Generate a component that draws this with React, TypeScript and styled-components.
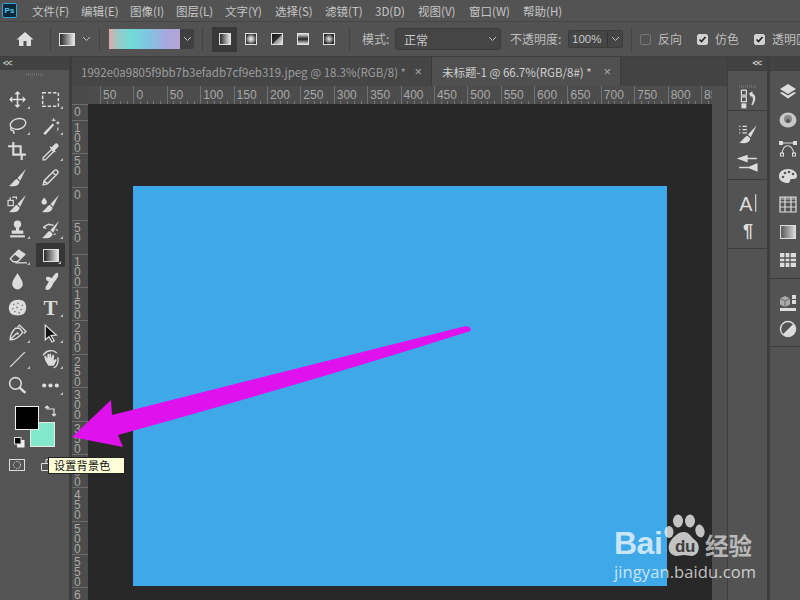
import React from "react";
import styled, { createGlobalStyle } from "styled-components";

const Global = createGlobalStyle`
  html, body { margin: 0; padding: 0; background: #535353; overflow: hidden; }
  * { box-sizing: border-box; }
  #root { width: 800px; height: 600px; }
  svg { display: block; flex: none; overflow: visible; }
`;

const FONT = `"Noto Sans CJK SC", "Liberation Sans", sans-serif`;

const Root = styled.div`
  position: relative; width: 800px; height: 600px; overflow: hidden;
  display: flex; flex-direction: column; background: #535353; color: #c4c4c4;
  font-family: ${FONT};
`;

/* ---------- menu ---------- */
const MenuBar = styled.div`
  height: 22px; flex: none; display: flex; align-items: center; background: #535353;
  border-bottom: 1px solid #464646; padding-left: 2px;
`;
const PsLogo = styled.div`
  width: 15px; height: 15px; margin-right: 15px; background: #0c2a3c; border: 1px solid #2fa3d6; border-radius: 2px;
  color: #5cc4ee; font: bold 8px/13px "Liberation Sans", sans-serif; text-align: center;
`;
const MenuItem = styled.span<{ $w: number }>`
  width: ${p => p.$w}px; flex: none; font-size: 11.5px; line-height: 20px; color: #c6c6c6; white-space: nowrap;
`;

/* ---------- options ---------- */
const OptionsBar = styled.div`
  height: 35px; flex: none; display: flex; align-items: center; background: #525252; overflow: hidden;
  border-bottom: 1px solid #3f3f3f; padding-left: 16px; font-size: 12px; color: #bfbfbf;
  & > * { flex: none; }
`;
const Sep = styled.div<{ $l: number; $r: number }>`
  width: 1px; height: 24px; background: #444; margin: 0 ${p => p.$r}px 0 ${p => p.$l}px;
`;
const Spacer = styled.span<{ $w: number }>`width: ${p => p.$w}px;`;
const GradPreview = styled.div`
  width: 71px; height: 20px;
  background: linear-gradient(90deg, #e2a9ab 0%, #9cc8c6 12%, #70dcd8 30%, #80c5e2 55%, #a8a8de 80%, #b3a3d6 100%);
`;
const GradDrop = styled.div`
  width: 14px; height: 20px; background: #3f3f3f; display: flex; align-items: center; justify-content: center;
  border-radius: 0 2px 2px 0;
`;
const ModeBtn = styled.div<{ $on?: boolean }>`
  width: 25px; height: 25px; display: flex; align-items: center; justify-content: center;
  background: ${p => (p.$on ? "#383838" : "transparent")};
  margin-left: ${p => (p.$on ? 0 : 1)}px;
`;
const Label = styled.span<{ $w: number }>`
  width: ${p => p.$w}px; white-space: nowrap; font-size: 12px; line-height: 18px; color: #bdbdbd;
`;
const SelectBox = styled.div`
  width: 106px; height: 22px; background: #454545; border: 1px solid #3c3c3c; border-radius: 3px;
  display: flex; align-items: center; justify-content: space-between; padding: 0 3px 0 8px; font-size: 12px; color: #c8c8c8;
`;
const PercentBox = styled.div`
  width: 55px; height: 18px; display: flex; align-items: center; background: #454545; border: 1px solid #3c3c3c; border-radius: 2px;
  font: 11.5px "Liberation Sans", sans-serif; color: #c8c8c8; padding-left: 3px; justify-content: space-between;
`;
const PercentDrop = styled.span`
  width: 15px; height: 16px; border-left: 1px solid #333; display: flex; align-items: center; justify-content: center;
`;
const Check = styled.div<{ $on?: boolean }>`
  width: 11px; height: 11px; margin-right: 7px; border-radius: 2px;
  border: 1px solid ${p => (p.$on ? "#d0d0d0" : "#777")};
  background: ${p => (p.$on ? "#d0d0d0" : "transparent")};
  display: flex; align-items: center; justify-content: center;
`;

/* ---------- workspace ---------- */
const Workspace = styled.div`flex: 1; min-height: 0; display: flex;`;
const LeftBar = styled.div`
  width: 69px; flex: none; background: #545454; display: flex; flex-direction: column; position: relative;
`;
const Collapse = styled.div`
  height: 13px; flex: none; background: #424242; font: bold 9px/12px "Liberation Sans", sans-serif; color: #bbb;
  padding-left: 3px; letter-spacing: -1px;
`;
const Grip = styled.div<{ $w: number }>`
  width: ${p => p.$w}px; height: 3px; margin: 3px auto 0; flex: none;
  background: repeating-linear-gradient(90deg, #6a6a6a 0 1px, transparent 1px 2px);
`;
const ToolGrid = styled.div`
  margin-top: 10px; display: grid; grid-template-columns: 33px 33px; grid-auto-rows: 26px; padding-left: 1px;
`;
const Tool = styled.div<{ $on?: boolean; $tri?: boolean }>`
  position: relative; display: flex; align-items: center; justify-content: center; color: #dcdcdc;
  ${p => p.$on && `background: #363636; margin: 1px 2px;  border-radius: 1px;`}
  ${p => p.$tri && `&::after { content: ""; position: absolute; right: 4px; bottom: 3px; border-style: solid; border-width: 0 0 3px 3px; border-color: transparent transparent #bbb transparent; }`}
`;
const Swatches = styled.div`position: relative; height: 48px; margin-top: 8px; flex: none;`;
const Fg = styled.div`
  position: absolute; left: 15px; top: 0; width: 24px; height: 24px; background: #000; border: 1px solid #eee; z-index: 1;
`;
const Bg = styled.div`
  position: absolute; left: 30px; top: 16px; width: 25px; height: 25px; background: #84e8cd; border: 1px solid #e8e8e8;
`;
const SwapIcon = styled.div`position: absolute; left: 45px; top: -1px;`;
const DefaultIcon = styled.div`position: absolute; left: 14px; top: 31px;`;
const MaskRow = styled.div`display: flex; padding-left: 9px; gap: 16px; margin-top: 5px;`;

const Divider = styled.div`width: 3px; flex: none; background: #3d3d3d;`;

const DocColumn = styled.div`width: 640px; flex: none; display: flex; flex-direction: column;`;
const TabRow = styled.div`height: 29px; flex: none; display: flex; background: #434343; font: 12px ${FONT};`;
const DocTab = styled.div<{ $on?: boolean; $w: number }>`
  width: ${p => p.$w}px; flex: none; display: flex; align-items: center; padding: 0 9px 0 ${p => (p.$on ? 10 : 9)}px;
  justify-content: space-between; white-space: nowrap;
  background: ${p => (p.$on ? "#505050" : "#454545")}; color: ${p => (p.$on ? "#cfcfcf" : "#9d9d9d")};
  border-right: 1px solid #3a3a3a;
`;
const TabText = styled.span`font-size: 11.5px;`;
const TabClose = styled.span`font: 13px "Liberation Sans", sans-serif; color: #a8a8a8;`;

const HRulerRow = styled.div`height: 18px; flex: none; display: flex; background: #4c4c4c;`;
const RulerCorner = styled.div`width: 16px; flex: none; background: #4a4a4a;`;
const HRuler = styled.div`
  flex: 1; display: flex; overflow: hidden; padding-left: 12px; position: relative;
  background: repeating-linear-gradient(90deg, #777 0 1px, transparent 1px 6.68px) 12px 100% / 100% 3px no-repeat;
`;
const HCell = styled.div`
  width: 33.4px; flex: none; border-left: 1px solid #707070; font: 12px/18px "Liberation Sans", sans-serif; color: #a8a8a8; padding-left: 2px;
`;
const Body = styled.div`flex: 1; min-height: 0; display: flex;`;
const VRuler = styled.div`
  width: 16px; flex: none; background: #4c4c4c; overflow: hidden; display: flex; flex-direction: column;
`;
const VCell = styled.div<{ $h: number }>`
  height: ${p => p.$h}px; flex: none; border-top: 1px solid #6e6e6e; padding: 2px 0 0 2px;
`;
const VDigits = styled.div`
  width: 8px; font: 12px/10px "Liberation Sans", sans-serif; color: #a8a8a8; word-break: break-all;
`;
const Canvas = styled.div`
  flex: 1; background: #282828; padding: 82px 0 0 45px;
`;
const Artboard = styled.div`width: 534px; height: 400px; background: #3ea8e8;`;

/* ---------- right dock ---------- */
const Dock = styled.div`flex: 1; min-width: 0; display: flex; background: #4f4f4f; overflow: hidden;`;
const Strip = styled.div`width: 16px; flex: none; background: #4f4f4f; border-right: 1px solid #3e3e3e; display: flex; flex-direction: column;`;
const StripHead = styled.div`height: 29px; background: #434343; flex: none;`;
const DockCol = styled.div<{ $w: number }>`
  width: ${p => p.$w}px; flex: none; display: flex; flex-direction: column; background: #3d3d3d; gap: 1px;
`;
const DockHead = styled.div`height: 13px; flex: none; background: #424242; font: bold 9px/12px "Liberation Sans", sans-serif; color: #ccc; letter-spacing: -1px; text-align: right; padding-right: 6px;`;
const DockGroup = styled.div<{ $h?: number; $grow?: boolean; $gap?: number; $top?: number }>`
  ${p => (p.$h ? `height: ${p.$h}px; flex: none;` : "")}
  ${p => (p.$grow ? "flex: 1;" : "")}
  background: #535353; display: flex; flex-direction: column; align-items: center; color: #dedede;
  padding-top: ${p => p.$top ?? 0}px; gap: ${p => p.$gap ?? 0}px;
`;
const ColGap = styled.div`width: 3px; flex: none; background: #3d3d3d;`;

/* ---------- overlays ---------- */
const Arrow = styled.svg`position: absolute; left: 0; top: 0; pointer-events: none;`;
const Tip = styled.div`
  position: absolute; left: 48px; top: 457px; width: 77px; height: 17px; background: #fdfdd8; border: 1px solid #222;
  font: 11px/15px ${FONT}; color: #111; padding-left: 5px; letter-spacing: 0.3px; white-space: nowrap;
`;
const Watermark = styled.div`
  position: absolute; left: 614px; top: 514px; width: 150px; height: 70px; color: rgba(255,255,255,.72); pointer-events: none;
`;
const WmTop = styled.div`display: flex; align-items: flex-end; height: 46px;`;
const WmBai = styled.span`font: bold 32px/34px "Liberation Sans", sans-serif; width: 50px; letter-spacing: -0.5px;`;
const WmJy = styled.span`font: bold 23.5px/30px ${FONT}; margin-left: -1px; color: rgba(255,255,255,.62);`;
const WmUrl = styled.div`font: 16.500px/18px "Open Sans", "Liberation Sans", sans-serif; margin-top: 3px; letter-spacing: .1px;`;

/* ---------- icons ---------- */
const S: React.FC<{ s?: number; children: React.ReactNode }> = ({ s = 20, children }) => (
  <svg width={s} height={s} viewBox="0 0 20 20" fill="none">{children}</svg>
);
const C = "#dcdcdc";
const brush = (
  <>
    <path d="M18 2 L10 10.500 L12.500 13 Z" fill={C} />
    <path d="M9.500 11.500 C7 12 6 15 2 18 C7 19 11.500 18 12 14 Z" fill={C} />
  </>
);
const Line = (d: string, w = 1.4) => <path d={d} stroke={C} strokeWidth={w} fill="none" />;

const icons: Record<string, React.ReactNode> = {
  move: <>{Line("M10 3V17M3 10H17", 1.5)}<path d="M10 2l3 3H7zM10 18l3-3H7zM2 10l3 3V7zM18 10l-3 3V7z" fill={C} /></>,
  marquee: <rect x="2.500" y="3.500" width="15" height="13" stroke={C} strokeWidth="1.400" strokeDasharray="3.200 1.800" />,
  lasso: <>{<ellipse cx="10.500" cy="8.500" rx="7.500" ry="5" transform="rotate(-15 10.500 8.500)" stroke={C} strokeWidth="1.300" />}{Line("M4 12c-1 2 0 3 1.500 3s1 3 1 3")}</>,
  wand: <><path d="M3 17.500L12 8l1.500 1.500L5 19z" fill={C} /><path d="M13 3v3M11 5h4M17 6v3M15.500 7.500h3M17 12v3" stroke={C} strokeWidth="1" /></>,
  crop: <>{Line("M1 5H13V14M6 1V13H18M14 13V18", 2)}</>,
  drop: <><path d="M3 16L11 8l2 2-8 8H3z" stroke={C} strokeWidth="1.300" /><path d="M11 6l3-3c1-1 2-1 3 0s1 2 0 3l-3 3 1 1-1 1-5-5 1-1z" fill={C} /></>,
  brush,
  pencil: <path d="M3 17l1-4L13.500 3.500c1-1 2-1 3 0s1 2 0 3L7 16zM4 13l3 3M12 5l3 3" stroke={C} strokeWidth="1.300" />,
  replace: <>{brush}<rect x="1" y="7" width="5" height="5" stroke={C} strokeWidth="1.100" />{Line("M5 4h4v2M3 7V4", 1.1)}</>,
  mix: <>{brush}<path d="M4 4c1 2 2.500 3 2.500 4.500a2.500 2.500 0 0 1-5 0C1.500 7 3 6 4 4z" fill={C} /></>,
  stamp: <><circle cx="10" cy="5" r="3.500" fill={C} /><path d="M8.500 8h3v3h4v3h-11v-3h4z" fill={C} /><rect x="3" y="15.500" width="14" height="2" fill={C} /></>,
  history: <>{brush}{Line("M3 8l5-3 5 1M3 8l3 1", 1.3)}{Line("M15 10l2 1M13 15l2-1", 1.1)}</>,
  eraser: <><path d="M3 13L11 5l6 4-7 7H6z" stroke={C} strokeWidth="1.300" /><path d="M11 5l6 4-4 4-6-4z" fill={C} />{Line("M8 17H19", 1.2)}</>,
  blur: <path d="M10 2c2 4 5 7 5 10.500a5 5 0 0 1-10 0C5 9 8 6 10 2z" fill={C} />,
  smudge: <path d="M17 2c1 2 0 4-1.500 6l-3 4c-1 3-3 6-5 6-2 .5-3-1-2-3l3-5C6 9 5 8 6 6c2-1 4 0 5 1l3-4c1-1 2-2 3-1z" fill={C} />,
  sponge: <><path d="M4 5c3-3 9-3 12-1 3 3 3 9 0 12-3 2-9 2-12 0-3-3-3-8 0-11z" fill={C} /><path d="M6 7h1M10 6h1M14 8h1M5 11h1M9 10h1M13 12h1M7 14h1M11 15h1" stroke="#555" strokeWidth="1.200" /></>,
  text: <text x="10" y="17" textAnchor="middle" fill={C} fontFamily="Liberation Serif, serif" fontWeight="bold" fontSize="20">T</text>,
  pen: <><path d="M3 16c0-4 1-7 5-11l4 0 3 4c-3 4-6 7-11 7zM3 16l6-6" stroke={C} strokeWidth="1.300" /><circle cx="10" cy="10" r="1.200" fill={C} /><path d="M10 4l2-2 6 6-2 2" stroke={C} strokeWidth="1.300" /></>,
  select: <path d="M5 2L5 16l3.500-3 3 5 2-1-3-5 5-.5z" fill="#111" stroke={C} strokeWidth="1.200" />,
  line: Line("M3 17L17 3", 1.2),
  hand: <><path d="M5 11l-1-4 1.500-.5L7 9V5l1.500-.5.5 4V4.500h1.500L11 9l1-3.500 1.500.5L13 11l2-1.500 1 1L13 16H8z" fill={C} />{Line("M3 6C6 1 13 0 16 4M17 8C18 13 16 17 13 18", 1.3)}</>,
  zoom: <><circle cx="8" cy="8" r="5.500" stroke={C} strokeWidth="1.500" /><path d="M12 12l5.500 5" stroke={C} strokeWidth="2.400" /></>,
  dots: <><circle cx="4" cy="10" r="2" fill={C} /><circle cx="10" cy="10" r="2" fill={C} /><circle cx="16" cy="10" r="2" fill={C} /></>,
  history2: <><rect x="4" y="2" width="4.500" height="4.500" stroke={C} strokeWidth="1.100" /><rect x="4" y="8" width="4.500" height="4.500" stroke={C} strokeWidth="1.100" /><rect x="4" y="14" width="4.500" height="4.500" fill={C} /><path d="M11 5l3-2v2c3 1 4 6 0 11l-1-1c2-3 2-7 0-8v2z" fill={C} /></>,
  brushset: <>{brush}<path d="M2 3h1M2 6h1M2 9h1M5 3h4M5 6h4M5 9h4" stroke={C} strokeWidth="1.200" /></>,
  brushopt: <><path d="M2 6l7-2.500v5zM9 6H18M2 14H11M11 14l7-3v6z" stroke={C} strokeWidth="1.400" fill={C} /></>,
  layers: <><path d="M10 2l8 5-8 5-8-5z" fill={C} /><path d="M2 11l2-1 6 3.500L16 10l2 1-8 5.500z" fill={C} /></>,
  channels: <><ellipse cx="10" cy="10" rx="8.500" ry="7.500" fill="#c8c8c8" /><circle cx="10" cy="9" r="4" fill="#8a8a8a" /><circle cx="10" cy="11" r="2" fill="#555" /></>,
  paths: <><path d="M4 16C5 5 14 5 16 16M2 5H18" stroke={C} strokeWidth="1.100" /><rect x="1" y="3" width="4" height="4" fill={C} /><rect x="15" y="3" width="4" height="4" fill={C} /><rect x="2.500" y="15" width="3" height="3" stroke={C} /><rect x="14.500" y="15" width="3" height="3" stroke={C} /></>,
  palette: <><path d="M10 3c5 0 9 3 9 7 0 3-3 3-5 3-2 0-2 1-2 2 0 2-2 2-4 2-4-1-7-3-7-7 0-4 4-7 9-7z" fill={C} /><circle cx="7" cy="7" r="1.300" fill="#555" /><circle cx="11" cy="6" r="1.300" fill="#555" /><circle cx="15" cy="8" r="1.300" fill="#555" /><circle cx="5" cy="11" r="1.300" fill="#555" /></>,
  swatches: <><path d="M2 3h16v15H2zM2 8h16M2 13h16M7 3v15M13 3v15" stroke={C} strokeWidth="1.200" /><rect x="2" y="3" width="16" height="3" fill={C} opacity=".4" /></>,
  gradPanel: <><defs><linearGradient id="gp" x1="0" y1="0" x2="1" y2="0"><stop offset="0" stopColor="#555" /><stop offset="1" stopColor="#ddd" /></linearGradient></defs><rect x="2.500" y="3.500" width="15" height="13" fill="url(#gp)" stroke={C} /></>,
  pattern: <><rect x="2" y="3" width="16" height="14" fill={C} /><path d="M7 3v14M12 3v14M2 8h16M2 12h16" stroke="#555" strokeWidth="1.300" /><rect x="8" y="9" width="3" height="2" fill={C} /></>,
  adjust3d: <><path d="M7 4l5 2.500v6L7 15l-5-2.500v-6z" fill="#aaa" /><path d="M7 9v6M2 6.500L7 9l5-2.500" stroke="#666" /><rect x="14" y="3" width="4" height="4" fill={C} /><rect x="14" y="8" width="4" height="4" fill={C} /><rect x="2" y="16" width="16" height="3" fill={C} /></>,
  adjust: <><circle cx="10" cy="10" r="7.500" stroke={C} strokeWidth="1.400" /><path d="M15.500 4.700A7.500 7.500 0 0 1 4.700 15.500z" fill={C} /></>,
  para: <text x="10" y="17" textAnchor="middle" fill={C} fontFamily="Liberation Sans, sans-serif" fontWeight="bold" fontSize="18">¶</text>,
  charA: <><text x="8" y="17" textAnchor="middle" fill={C} fontFamily="Liberation Sans, sans-serif" fontSize="18">A</text><path d="M17 2V18" stroke={C} strokeWidth="1" /></>,
};
const Ico: React.FC<{ n: string; s?: number }> = ({ n, s }) => <S s={s}>{icons[n]}</S>;

const Chevron: React.FC = () => (
  <svg width="9" height="6" viewBox="0 0 9 6" fill="none"><path d="M1 1l3.500 3.500L8 1" stroke="#bdbdbd" strokeWidth="1" /></svg>
);
const Tick: React.FC = () => (
  <svg width="9" height="9" viewBox="0 0 9 9"><path d="M1.500 4.500l2 2L7.500 2" stroke="#222" strokeWidth="1.600" fill="none" /></svg>
);

const GradSwatch: React.FC<{ id: string; kind: string; w?: number; h?: number }> = ({ id, kind, w = 13, h = 13 }) => {
  const fills: Record<string, React.ReactNode> = {
    l: <linearGradient id={id}><stop offset="0" stopColor="#222" /><stop offset="1" stopColor="#eee" /></linearGradient>,
    r: <radialGradient id={id}><stop offset="0" stopColor="#eee" /><stop offset=".4" stopColor="#bbb" /><stop offset="1" stopColor="#333" /></radialGradient>,
    a: <linearGradient id={id} x1="0" y1="0" x2="1" y2="1"><stop offset="0" stopColor="#111" /><stop offset=".5" stopColor="#333" /><stop offset=".5" stopColor="#888" /><stop offset="1" stopColor="#eee" /></linearGradient>,
    m: <linearGradient id={id} x1="0" y1="0" x2="0" y2="1"><stop offset="0" stopColor="#eee" /><stop offset=".5" stopColor="#222" /><stop offset="1" stopColor="#eee" /></linearGradient>,
    d: <radialGradient id={id}><stop offset="0" stopColor="#eee" /><stop offset="1" stopColor="#222" /></radialGradient>,
  };
  return (
    <svg width={w} height={h} viewBox={`0 0 ${w} ${h}`}>
      <defs>{fills[kind]}</defs>
      <rect x=".5" y=".5" width={w - 1} height={h - 1} fill={`url(#${id})`} stroke="#e0e0e0" />
    </svg>
  );
};

const menu: [string, number][] = [
  ["文件(F)", 49], ["编辑(E)", 49], ["图像(I)", 46], ["图层(L)", 49], ["文字(Y)", 50], ["选择(S)", 50],
  ["滤镜(T)", 50], ["3D(D)", 43], ["视图(V)", 51], ["窗口(W)", 54], ["帮助(H)", 60],
];

const tools: [string, boolean, boolean?][] = [
  ["move", true], ["marquee", true], ["lasso", true], ["wand", true], ["crop", false], ["drop", true],
  ["brush", false], ["pencil", false], ["replace", false], ["mix", false], ["stamp", true], ["history", true],
  ["eraser", true], ["gradient", true, true], ["blur", false], ["smudge", false], ["sponge", false], ["text", true],
  ["pen", true], ["select", true], ["line", true], ["hand", true], ["zoom", false], ["dots", true],
];

const hLabels = ["50", "0", "50", "100", "150", "200", "250", "300", "350", "400", "450", "500", "550", "600", "650", "700", "750", "800", "85"];
const vLabels: [string, number][] = [
  ["0", 16], ["100", 33.4], ["50", 33.4], ["0", 33.4], ["50", 33.4], ["100", 33.4], ["150", 33.4], ["200", 33.4], ["250", 33.4],
  ["300", 33.4], ["350", 33.4], ["400", 33.4], ["450", 33.4], ["500", 33.4], ["550", 33.4], ["6", 30],
];

export default function App() {
  return (
    <Root>
      <Global />
      <MenuBar>
        <PsLogo>Ps</PsLogo>
        {menu.map(([t, w]) => <MenuItem key={t} $w={w}>{t}</MenuItem>)}
      </MenuBar>

      <OptionsBar>
        <svg width="18" height="16" viewBox="0 0 18 16"><path d="M9 1L0.500 8.500H3V15H7.500V10H10.500V15H15V8.500H17.500z" fill="#dedede" /></svg>
        <Sep $l={16} $r={8} />
        <GradSwatch id="g0" kind="l" w={16} h={13} />
        <Spacer $w={7} />
        <Chevron />
        <Sep $l={8} $r={9} />
        <GradPreview />
        <GradDrop><Chevron /></GradDrop>
        <Sep $l={8} $r={9} />
        <ModeBtn $on><GradSwatch id="g1" kind="l" w={12} h={12} /></ModeBtn>
        <ModeBtn><GradSwatch id="g2" kind="r" w={12} h={12} /></ModeBtn>
        <ModeBtn><GradSwatch id="g3" kind="a" w={12} h={12} /></ModeBtn>
        <ModeBtn><GradSwatch id="g4" kind="m" w={12} h={12} /></ModeBtn>
        <ModeBtn><GradSwatch id="g5" kind="d" w={12} h={12} /></ModeBtn>
        <Sep $l={8} $r={12} />
        <Label $w={33}>模式:</Label>
        <SelectBox><span>正常</span><Chevron /></SelectBox>
        <Spacer $w={9} />
        <Label $w={58}>不透明度:</Label>
        <PercentBox>100%<PercentDrop><Chevron /></PercentDrop></PercentBox>
        <Sep $l={8} $r={8} />
        <Check />
        <Label $w={39}>反向</Label>
        <Check $on><Tick /></Check>
        <Label $w={39}>仿色</Label>
        <Check $on><Tick /></Check>
        <Label $w={48}>透明区域</Label>
      </OptionsBar>

      <Workspace>
        <LeftBar>
          <Collapse>&lt;&lt;</Collapse>
          <Grip $w={18} />
          <ToolGrid>
            {tools.map(([n, tri, on]) => (
              <Tool key={n} $tri={tri} $on={on}>
                {n === "gradient" ? <GradSwatch id="gt" kind="l" w={16} h={13} /> : <Ico n={n} s={21} />}
              </Tool>
            ))}
          </ToolGrid>
          <Swatches>
            <Fg />
            <Bg />
            <SwapIcon>
              <svg width="12" height="12" viewBox="0 0 12 12" fill="none"><path d="M2 1v3h7v7M0 3l2-2 2 2M7 9l2 2 2-2" stroke="#ddd" strokeWidth="1.200" /></svg>
            </SwapIcon>
            <DefaultIcon>
              <svg width="11" height="11" viewBox="0 0 11 11"><rect x="3" y="3" width="7.500" height="7.500" fill="#eee" /><rect x=".5" y=".5" width="6.500" height="6.500" fill="#000" stroke="#ddd" /></svg>
            </DefaultIcon>
          </Swatches>
          <MaskRow>
            <svg width="16" height="12" viewBox="0 0 16 12" fill="none"><rect x=".5" y=".5" width="15" height="11" stroke="#ddd" /><circle cx="8" cy="6" r="3.500" stroke="#ddd" strokeDasharray="1.500 1" /></svg>
            <svg width="16" height="12" viewBox="0 0 16 12" fill="none"><path d="M.5 4.500h9v7h-9zM5 4.500V.5h9v7h-4" stroke="#ddd" /></svg>
          </MaskRow>
        </LeftBar>
        <Divider />

        <DocColumn>
          <TabRow>
            <DocTab $w={360}>
              <TabText>1992e0a9805f9bb7b3efadb7cf9eb319.jpeg @ 18.3%(RGB/8) *</TabText>
              <TabClose>×</TabClose>
            </DocTab>
            <DocTab $on $w={189}>
              <TabText>未标题-1 @ 66.7%(RGB/8#) *</TabText>
              <TabClose>×</TabClose>
            </DocTab>
          </TabRow>
          <HRulerRow>
            <RulerCorner />
            <HRuler>
              {hLabels.map((t, i) => <HCell key={i}>{t}</HCell>)}
            </HRuler>
          </HRulerRow>
          <Body>
            <VRuler>
              {vLabels.map(([t, h], i) => (
                <VCell key={i} $h={h}><VDigits>{t}</VDigits></VCell>
              ))}
            </VRuler>
            <Canvas><Artboard /></Canvas>
          </Body>
        </DocColumn>

        <Dock>
          <Strip><StripHead /></Strip>
          <DockCol $w={39}>
            <DockHead>&lt;&lt;</DockHead>
            <DockGroup $h={39} $top={11}><Grip $w={18} /><Ico n="history2" s={22} /></DockGroup>
            <DockGroup $h={68} $top={12} $gap={7}><Ico n="brushset" s={22} /><Ico n="brushopt" s={22} /></DockGroup>
            <DockGroup $h={68} $top={12} $gap={6}><Ico n="charA" s={22} /><Ico n="para" s={20} /></DockGroup>
            <DockGroup $grow />
          </DockCol>
          <ColGap />
          <DockCol $w={36}>
            <DockHead />
            <DockGroup $h={207} $top={11} $gap={8}>
              <Ico n="layers" s={20} /><Ico n="channels" s={20} /><Ico n="paths" s={20} />
              <Ico n="palette" s={20} /><Ico n="swatches" s={20} /><Ico n="gradPanel" s={20} /><Ico n="pattern" s={20} />
            </DockGroup>
            <DockGroup $h={67} $top={13} $gap={7}><Ico n="adjust3d" s={20} /><Ico n="adjust" s={20} /></DockGroup>
            <DockGroup $grow />
          </DockCol>
        </Dock>
      </Workspace>

      <Arrow width="800" height="600" viewBox="0 0 800 600">
        <path d="M72 437L111 400L112 415L466 326Q472 327 470.500 331Q300 385 118 435L123 447Z" fill="#df12ee" />
      </Arrow>
      <Tip>设置背景色</Tip>

      <Watermark>
        <WmTop>
          <WmBai>Bai</WmBai>
          <svg width="42" height="46" viewBox="0 0 42 46">
            <ellipse cx="5" cy="18" rx="4.500" ry="6" fill="currentColor" />
            <ellipse cx="14" cy="7" rx="5" ry="6.500" fill="currentColor" />
            <ellipse cx="26" cy="7" rx="5" ry="6.500" fill="currentColor" />
            <ellipse cx="36" cy="17" rx="4.500" ry="6.500" fill="currentColor" transform="rotate(-15 36 17)" />
            <path d="M20 18c5 0 7 5 12 9 5 5 3 14-4 15-3 0-5-1-8-1s-5 1-8 1c-7-1-9-8-6-14 3-5 8-10 14-10z" fill="currentColor" />
            <text x="21" y="38" textAnchor="middle" fontFamily="Liberation Sans, sans-serif" fontWeight="bold" fontSize="17" fill="#3f3f3f" letterSpacing="-.5">du</text>
          </svg>
          <WmJy>经验</WmJy>
        </WmTop>
        <WmUrl>jingyan.baidu.com</WmUrl>
      </Watermark>
    </Root>
  );
}
